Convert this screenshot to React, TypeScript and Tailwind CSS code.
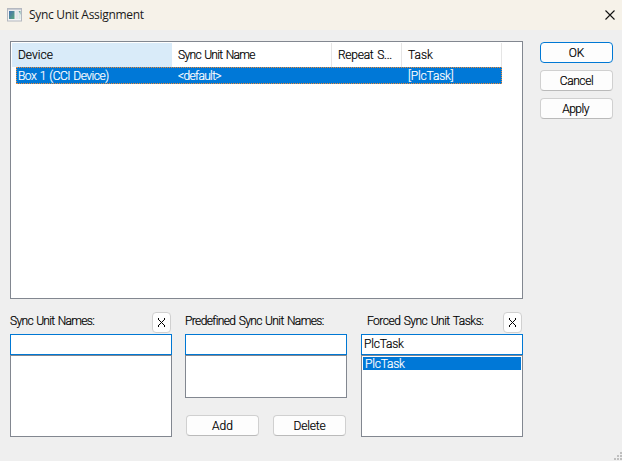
import React from "react";

function PushButton({ label, primary = false, className = "" }: { label: string; primary?: boolean; className?: string }) {
  return (
    <button
      className={`flex h-[21px] items-center justify-center rounded-[4px] border bg-[#fdfdfd] leading-none [-webkit-text-stroke:0.2px_currentColor] ${
        primary ? "border-[#0078d4]" : "border-[#d0d0d0] border-b-[#bababa]"
      } ${className}`}
    >
      {label}
    </button>
  );
}

function ClearButton() {
  return (
    <button aria-label="Clear" className="flex h-[21px] w-[19px] items-center justify-center rounded-[4px] border border-[#d0d0d0] bg-[#fdfdfd]">
      <svg width="7" height="9" viewBox="0 0 7 9" shapeRendering="crispEdges">
        <path d="M0 0h1v2H0zM6 0h1v2H6zM1 2h1v1H1zM5 2h1v1H5zM2 3h1v1H2zM4 3h1v1H4zM3 4h1v1H3zM2 5h1v1H2zM4 5h1v1H4zM1 6h1v1H1zM5 6h1v1H5zM0 7h1v2H0zM6 7h1v2H6z" fill="#000" />
      </svg>
    </button>
  );
}

function Group({
  label,
  labelClass,
  clearable = false,
  value = "",
  listClass,
  children,
}: {
  label: string;
  labelClass: string;
  clearable?: boolean;
  value?: string;
  listClass: string;
  children?: React.ReactNode;
}) {
  return (
    <section className="w-[162px]">
      <div className="flex h-[22px] items-start justify-between">
        <span className={`pt-[2px] leading-[14px] ${labelClass}`}>{label}</span>
        {clearable && (
          <span className="mr-[1px]">
            <ClearButton />
          </span>
        )}
      </div>
      <div className="h-[21px] border border-[#0078d4] bg-white pl-[2px] leading-[18px] tracking-[-0.2px]">{value}</div>
      <div className={`border border-[#828790] bg-white p-[1px] ${listClass}`}>{children}</div>
    </section>
  );
}

function AppIcon() {
  return (
    <svg width="16" height="14" viewBox="0 0 16 14">
      <defs>
        <linearGradient id="pane" x1="0" y1="0" x2="1" y2="1">
          <stop offset="0" stopColor="#4672b0" />
          <stop offset="1" stopColor="#58a67c" />
        </linearGradient>
      </defs>
      <rect x="0.5" y="0.5" width="14" height="12.5" fill="#f4f4f4" stroke="#b4b8c0" />
      <rect x="1" y="1" width="13" height="1.2" fill="#c9ccd3" />
      <rect x="2" y="3" width="5.5" height="8" fill="url(#pane)" />
      <rect x="8.5" y="3" width="2.5" height="8" fill="#e3e5e8" />
      <path d="M11.5 3h2v4z" fill="#6aa3a0" />
      <path d="M11.5 3v8h2V7z" fill="#d6e8e2" />
    </svg>
  );
}

export default function App() {
  return (
    <div className="flex h-[461px] w-[622px] flex-col overflow-hidden bg-[#efefef] font-['Roboto','Liberation_Sans',sans-serif] text-[12px] font-light whitespace-nowrap text-black [-webkit-text-stroke:0.2px_currentColor] [word-spacing:1px]">
      <header className="flex h-[30px] shrink-0 items-center bg-[#f6f2e9] pr-[7px] pl-[7px]">
        <AppIcon />
        <h1 className="ml-[6px] font-['Open_Sans','Noto_Sans',sans-serif] text-[12px] leading-[16px] font-normal tracking-[-0.3px] text-[#1a1a1a] [-webkit-text-stroke:0] [word-spacing:0]">Sync Unit Assignment</h1>
        <svg className="ml-auto" width="10" height="10" viewBox="0 0 10 10">
          <path d="M0.5 0.5l9 9M9.5 0.5l-9 9" stroke="#111" strokeWidth="1.1" />
        </svg>
      </header>

      <main className="flex gap-[17px] pt-[11px] pl-[10px]">
        <div className="h-[258px] w-[513px] border border-[#828790] bg-white p-[1px]">
          <div className="flex h-[24px] leading-[25px]">
            <div className="w-[160px] bg-[#d9ebf9] pl-[6px]">Device</div>
            <div className="w-[160px] border-r border-[#e5e5e5] pl-[6px] tracking-[-0.68px]">Sync Unit Name</div>
            <div className="w-[70px] border-r border-[#e5e5e5] pl-[6px] tracking-[-0.25px]">Repeat S...</div>
            <div className="w-[100px] border-r border-[#e5e5e5] pl-[6px]">Task</div>
          </div>
          <div className="ml-[4px] flex h-[17px] w-[486px] border border-dotted border-[#f08a35] bg-[#0078d7] leading-[16px] text-white">
            <div className="w-[160px] pl-[1px] tracking-[-0.5px]">Box 1 (CCI Device)</div>
            <div className="w-[230px] pl-[1px] tracking-[-0.65px]">&lt;default&gt;</div>
            <div className="pl-[1px] tracking-[-0.15px]">[PlcTask]</div>
          </div>
        </div>
        <div className="flex flex-col gap-[7px] pt-[1px]">
          <PushButton label="OK" primary className="w-[73px]" />
          <PushButton label="Cancel" className="w-[73px] tracking-[-0.4px]" />
          <PushButton label="Apply" className="w-[73px] pr-[2px] tracking-[-0.5px]" />
        </div>
      </main>

      <div className="flex gap-[13px] pt-[13px] pl-[10px]">
        <Group label="Sync Unit Names:" labelClass="tracking-[-0.68px]" clearable listClass="h-[82px]" />
        <div className="w-[163px]">
          <Group label="Predefined Sync Unit Names:" labelClass="tracking-[-0.62px]" listClass="h-[43px]" />
          <div className="flex gap-[14px] pt-[17px] pl-[1px]">
            <PushButton label="Add" className="w-[73px]" />
            <PushButton label="Delete" className="w-[73px] tracking-[-0.2px]" />
          </div>
        </div>
        <Group label="Forced Sync Unit Tasks:" labelClass="pl-[6px] tracking-[-0.51px]" clearable value="PlcTask" listClass="h-[82px]">
          <div className="h-[13px] bg-[#0078d7] pl-[2px] leading-[14px] tracking-[-0.2px] text-white">PlcTask</div>
        </Group>
      </div>

      <footer className="mt-auto flex justify-end">
        <svg width="8" height="9" viewBox="0 0 8 9" shapeRendering="crispEdges">
          <path d="M6 0h2v2H6zM3 3h2v2H3zM6 3h2v2H6zM0 6h2v2H0zM3 6h2v2H3zM6 6h2v2H6z" fill="#bfbfbf" />
        </svg>
      </footer>
    </div>
  );
}
